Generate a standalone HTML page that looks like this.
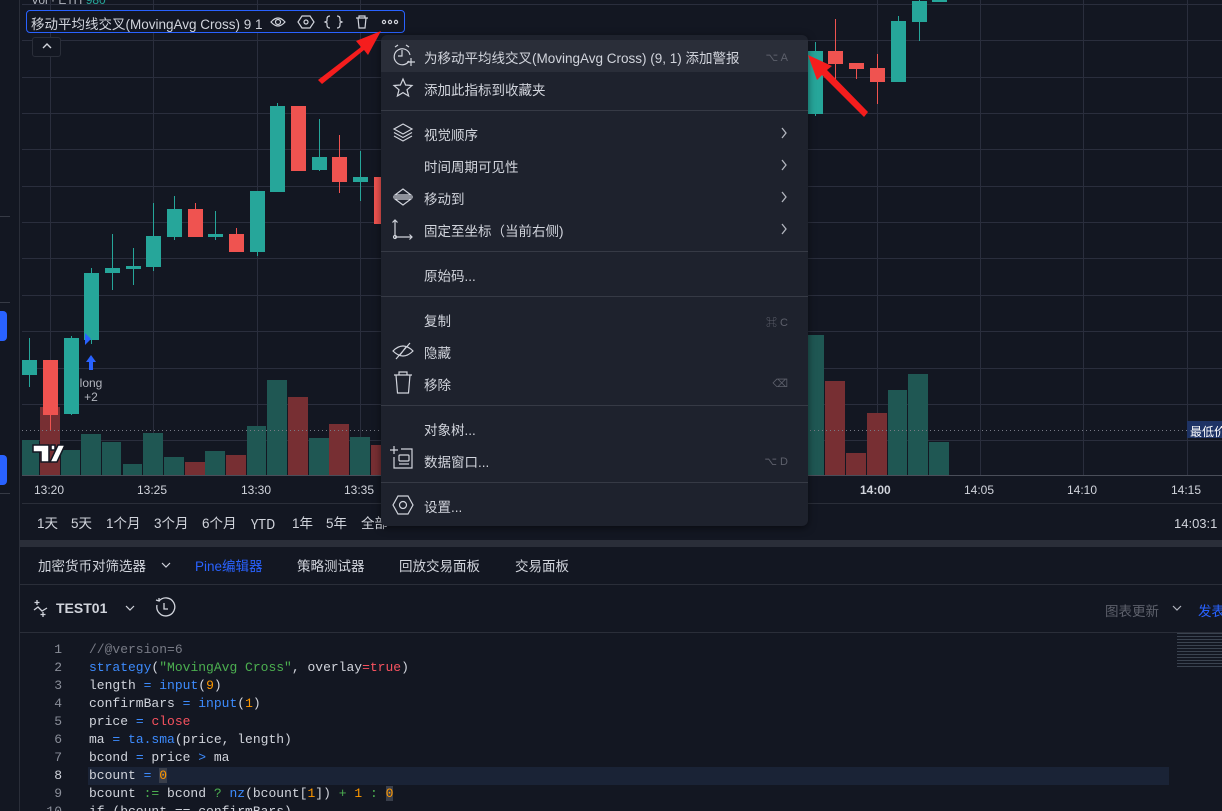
<!DOCTYPE html>
<html><head><meta charset="utf-8">
<style>
*{margin:0;padding:0;box-sizing:border-box}
html,body{width:1222px;height:811px;overflow:hidden}
body{background:#131722;font-family:"Liberation Sans","Noto Sans CJK SC",sans-serif;color:#d1d4dc;position:relative}
.a{position:absolute}
.t{position:absolute;white-space:nowrap}
.mi{position:absolute;left:43px;font-size:13.5px;color:#d1d4dc;white-space:nowrap}
.sc{position:absolute;right:20px;font-size:11px;color:#5d606b}
.sep{position:absolute;left:0;right:0;height:1px;background:#363a45}
.chev{position:absolute;right:20px}
.code{position:absolute;left:89px;font-family:"Liberation Mono",monospace;font-size:13px;color:#d1d4dc;white-space:pre}
.ln{position:absolute;left:40px;width:22px;text-align:right;font-family:"Liberation Mono",monospace;font-size:13px;color:#8a8e99}
.f{color:#3d8bfd}.s{color:#4caf50}.o{color:#ff9800}.r{color:#f7525f}.c{color:#787b86}
.rg{position:absolute;top:514px;height:20px;line-height:20px;font-size:13.5px;color:#d1d4dc;white-space:nowrap}
</style></head><body>
<div class="a" style="left:0;top:0;width:20px;height:811px;background:#131722;border-right:1px solid #2a2e39"></div>
<div class="a" style="left:0;top:311px;width:7px;height:30px;background:#2962ff;border-radius:0 4px 4px 0"></div>
<div class="a" style="left:0;top:455px;width:7px;height:30px;background:#2962ff;border-radius:0 4px 4px 0"></div>
<div class="a" style="left:0;top:216px;width:10px;height:1px;background:#363a45"></div>
<div class="a" style="left:0;top:302px;width:10px;height:1px;background:#363a45"></div>
<div class="a" style="left:0;top:493px;width:10px;height:1px;background:#363a45"></div>
<svg class="a" style="left:22px;top:0" width="1200" height="476" viewBox="22 0 1200 476">
<g stroke="#2a2e3d" stroke-width="1">
<line x1="22" x2="1222" y1="4.5" y2="4.5"/><line x1="22" x2="1222" y1="40.5" y2="40.5"/><line x1="22" x2="1222" y1="77.5" y2="77.5"/><line x1="22" x2="1222" y1="113.5" y2="113.5"/><line x1="22" x2="1222" y1="149.5" y2="149.5"/><line x1="22" x2="1222" y1="186.5" y2="186.5"/><line x1="22" x2="1222" y1="222.5" y2="222.5"/><line x1="22" x2="1222" y1="258.5" y2="258.5"/><line x1="22" x2="1222" y1="295.5" y2="295.5"/><line x1="22" x2="1222" y1="331.5" y2="331.5"/><line x1="22" x2="1222" y1="368.5" y2="368.5"/><line x1="22" x2="1222" y1="404.5" y2="404.5"/><line x1="22" x2="1222" y1="440.5" y2="440.5"/>
<line y1="0" y2="476" x1="50.5" x2="50.5"/><line y1="0" y2="476" x1="153.5" x2="153.5"/><line y1="0" y2="476" x1="257.5" x2="257.5"/><line y1="0" y2="476" x1="360.5" x2="360.5"/><line y1="0" y2="476" x1="877.5" x2="877.5"/><line y1="0" y2="476" x1="980.5" x2="980.5"/><line y1="0" y2="476" x1="1083.5" x2="1083.5"/><line y1="0" y2="476" x1="1187.5" x2="1187.5"/>
</g>
<g fill="#1f5753">
<rect x="22" y="440" width="17" height="36"/><rect x="61" y="450" width="19" height="26"/><rect x="81" y="434" width="20" height="42"/><rect x="102" y="442" width="19" height="34"/><rect x="123" y="464" width="19" height="12"/><rect x="143" y="433" width="20" height="43"/><rect x="164" y="457" width="20" height="19"/><rect x="205" y="451" width="20" height="25"/><rect x="247" y="426" width="19" height="50"/><rect x="267" y="380" width="20" height="96"/><rect x="309" y="438" width="20" height="38"/><rect x="350" y="437" width="20" height="39"/>
<rect x="804" y="335" width="20" height="141"/><rect x="888" y="390" width="19" height="86"/><rect x="908" y="374" width="20" height="102"/><rect x="929" y="442" width="20" height="34"/>
</g>
<g fill="#772f33">
<rect x="40" y="407" width="20" height="69"/><rect x="185" y="462" width="20" height="14"/><rect x="226" y="455" width="20" height="21"/><rect x="288" y="397" width="20" height="79"/><rect x="329" y="424" width="20" height="52"/><rect x="371" y="445" width="10" height="31"/>
<rect x="825" y="381" width="20" height="95"/><rect x="846" y="453" width="20" height="23"/><rect x="867" y="413" width="20" height="63"/>
</g>
<line x1="22" x2="1222" y1="430.5" y2="430.5" stroke="#787b86" stroke-dasharray="1 3"/>
<g stroke="#26a69a" fill="#26a69a">
<line x1="29.5" x2="29.5" y1="338" y2="387"/><rect x="22" y="360" width="15" height="15" stroke="none"/>
<line x1="71.5" x2="71.5" y1="336" y2="415"/><rect x="64" y="338" width="15" height="76" stroke="none"/>
<line x1="91.5" x2="91.5" y1="268" y2="344"/><rect x="84" y="273" width="15" height="67" stroke="none"/>
<line x1="112.5" x2="112.5" y1="234" y2="290"/><rect x="105" y="268" width="15" height="5" stroke="none"/>
<line x1="133.5" x2="133.5" y1="248" y2="285"/><rect x="126" y="266" width="15" height="3" stroke="none"/>
<line x1="153.5" x2="153.5" y1="203" y2="271"/><rect x="146" y="236" width="15" height="31" stroke="none"/>
<line x1="174.5" x2="174.5" y1="196" y2="240"/><rect x="167" y="209" width="15" height="28" stroke="none"/>
<line x1="215.5" x2="215.5" y1="211" y2="240"/><rect x="208" y="234" width="15" height="3" stroke="none"/>
<line x1="257.5" x2="257.5" y1="191" y2="256"/><rect x="250" y="191" width="15" height="61" stroke="none"/>
<line x1="277.5" x2="277.5" y1="103" y2="192"/><rect x="270" y="106" width="15" height="86" stroke="none"/>
<line x1="319.5" x2="319.5" y1="119" y2="171"/><rect x="312" y="157" width="15" height="13" stroke="none"/>
<line x1="360.5" x2="360.5" y1="151" y2="201"/><rect x="353" y="177" width="15" height="5" stroke="none"/>
<line x1="815.5" x2="815.5" y1="42" y2="116"/><rect x="808" y="51" width="15" height="63" stroke="none"/>
<line x1="898.5" x2="898.5" y1="16" y2="82"/><rect x="891" y="21" width="15" height="61" stroke="none"/>
<line x1="919.5" x2="919.5" y1="0" y2="41"/><rect x="912" y="1" width="15" height="21" stroke="none"/>
<rect x="932" y="0" width="15" height="2" stroke="none"/>
</g>
<g stroke="#ef5350" fill="#ef5350">
<line x1="50.5" x2="50.5" y1="360" y2="430"/><rect x="43" y="360" width="15" height="55" stroke="none"/>
<line x1="195.5" x2="195.5" y1="203" y2="237"/><rect x="188" y="209" width="15" height="28" stroke="none"/>
<line x1="236.5" x2="236.5" y1="228" y2="252"/><rect x="229" y="234" width="15" height="18" stroke="none"/>
<rect x="291" y="106" width="15" height="65" stroke="none"/>
<line x1="339.5" x2="339.5" y1="135" y2="193"/><rect x="332" y="157" width="15" height="25" stroke="none"/>
<rect x="374" y="177" width="7" height="47" stroke="none"/>
<line x1="835.5" x2="835.5" y1="19" y2="83"/><rect x="828" y="51" width="15" height="13" stroke="none"/>
<line x1="856.5" x2="856.5" y1="63" y2="79"/><rect x="849" y="63" width="15" height="6" stroke="none"/>
<line x1="877.5" x2="877.5" y1="54" y2="104"/><rect x="870" y="68" width="15" height="14" stroke="none"/>
</g>
<path d="M85 333 L91 339 L85 345Z" fill="#2962ff"/>
<path d="M91 355 L96 362 H93 V370 H89 V362 H86Z" fill="#2962ff"/>
<text x="91" y="387" font-size="12" fill="#b2b5be" text-anchor="middle" font-family="Liberation Sans">long</text>
<text x="91" y="401" font-size="12" fill="#b2b5be" text-anchor="middle" font-family="Liberation Sans">+2</text>
<path d="M33 445 H49 V462 H41 V452 H33Z M51 445 h4 v5 h-4z M58 445 H65 L57 462 H50Z" fill="#fff" stroke="#131722" stroke-width="1.5"/>
<line x1="22" x2="1222" y1="475.5" y2="475.5" stroke="#4a4e59"/>
</svg>
<div class="a" style="left:1187px;top:421px;width:35px;height:17px;background:#1e3365;font-size:12px;color:#fff;padding:2px 0 0 3px;white-space:nowrap;overflow:hidden">最低价</div>
<div class="t" style="left:31px;top:-7px;font-size:12px;color:#b2b5be">Vol · ETH <span style="color:#26a69a">980</span></div>
<div class="a" style="left:26px;top:10px;width:379px;height:23px;border:1px solid #2962ff;border-radius:4px;background:#131722"></div>
<div class="t" style="left:31px;top:13px;font-size:13.5px;color:#d1d4dc">移动平均线交叉(MovingAvg Cross) 9 1</div>
<svg class="a" style="left:268px;top:12px" width="135" height="20" fill="none" stroke="#d1d4dc" stroke-width="1.2">
<path d="M3 10 Q10 2 17 10 Q10 18 3 10Z"/><circle cx="10" cy="10" r="2.5"/>
<path d="M34 4 H42 L46 10 L42 16 H34 L30 10Z"/><circle cx="38" cy="10" r="2"/>
<path d="M62 4 Q59 4 59 7 V9 L57 10 L59 11 V13 Q59 16 62 16 M69 4 Q72 4 72 7 V9 L74 10 L72 11 V13 Q72 16 69 16"/>
<path d="M88 6 H100 M91 6 V4 H97 V6 M90 6 L91 16 H97 L98 6"/>
<circle cx="116" cy="10" r="1.6"/><circle cx="122" cy="10" r="1.6"/><circle cx="128" cy="10" r="1.6"/>
</svg>
<div class="a" style="left:32px;top:37px;width:29px;height:20px;border:1px solid #2a2e39;border-radius:3px;background:#131722"></div>
<svg class="a" style="left:40px;top:41px" width="14" height="10"><path d="M3 7 L7 3 L11 7" stroke="#d1d4dc" fill="none" stroke-width="1.4"/></svg>
<div class="t" style="left:34px;top:483px;font-size:12px;color:#d1d4dc">13:20</div>
<div class="t" style="left:137px;top:483px;font-size:12px;color:#d1d4dc">13:25</div>
<div class="t" style="left:241px;top:483px;font-size:12px;color:#d1d4dc">13:30</div>
<div class="t" style="left:344px;top:483px;font-size:12px;color:#d1d4dc">13:35</div>
<div class="t" style="left:860px;top:483px;font-size:12px;color:#d1d4dc;font-weight:bold">14:00</div>
<div class="t" style="left:964px;top:483px;font-size:12px;color:#d1d4dc">14:05</div>
<div class="t" style="left:1067px;top:483px;font-size:12px;color:#d1d4dc">14:10</div>
<div class="t" style="left:1171px;top:483px;font-size:12px;color:#d1d4dc">14:15</div>
<div class="a" style="left:22px;top:503px;width:1200px;height:1px;background:#2a2e39"></div>
<div class="rg" style="left:37px">1天</div><div class="rg" style="left:71px">5天</div><div class="rg" style="left:106px">1个月</div><div class="rg" style="left:154px">3个月</div><div class="rg" style="left:202px">6个月</div><div class="rg" style="left:251px;font-family:'Noto Sans CJK SC',sans-serif;top:513px">YTD</div><div class="rg" style="left:292px">1年</div><div class="rg" style="left:326px">5年</div><div class="rg" style="left:361px">全部</div>
<div class="t" style="left:1174px;top:516px;font-size:13px;color:#d1d4dc">14:03:1</div>
<div class="a" style="left:20px;top:540px;width:1202px;height:7px;background:#2a2e39"></div>
<div class="t" style="left:38px;top:555px;font-size:13.5px;color:#d1d4dc">加密货币对筛选器</div>
<svg class="a" style="left:160px;top:561px" width="12" height="8"><path d="M2 2 L6 6 L10 2" stroke="#d1d4dc" fill="none" stroke-width="1.2"/></svg>
<div class="t" style="left:195px;top:555px;font-size:13.5px;color:#2962ff">Pine编辑器</div>
<div class="t" style="left:297px;top:555px;font-size:13.5px;color:#d1d4dc">策略测试器</div>
<div class="t" style="left:399px;top:555px;font-size:13.5px;color:#d1d4dc">回放交易面板</div>
<div class="t" style="left:515px;top:555px;font-size:13.5px;color:#d1d4dc">交易面板</div>
<div class="a" style="left:20px;top:584px;width:1202px;height:1px;background:#2a2e39"></div>
<svg class="a" style="left:33px;top:599px" width="16" height="20" fill="none" stroke="#d1d4dc" stroke-width="1.3"><path d="M4 1 V6 M1.5 3.5 H6.5 M1 11 L5 8 L9 12 L14 9 M10 13 V18 M7.5 15.5 H12.5"/></svg>
<div class="t" style="left:56px;top:600px;font-size:14px;font-weight:bold;color:#d1d4dc">TEST01</div>
<svg class="a" style="left:124px;top:604px" width="12" height="8"><path d="M2 2 L6 6 L10 2" stroke="#d1d4dc" fill="none" stroke-width="1.2"/></svg>
<svg class="a" style="left:154px;top:597px" width="22" height="22" fill="none" stroke="#d1d4dc" stroke-width="1.3"><path d="M5 4 A9 9 0 1 1 3 8"/><path d="M2 3 L5 4 L5 1"/><path d="M10 6 V12 H14"/></svg>
<div class="t" style="left:1105px;top:600px;font-size:13.5px;color:#5d606b">图表更新</div>
<svg class="a" style="left:1171px;top:604px" width="12" height="8"><path d="M2 2 L6 6 L10 2" stroke="#b2b5be" fill="none" stroke-width="1.2"/></svg>
<div class="t" style="left:1198px;top:600px;font-size:13.5px;color:#2962ff">发表</div>
<div class="a" style="left:20px;top:632px;width:1202px;height:1px;background:#2a2e39"></div>
<div class="a" style="left:1177px;top:633px;width:45px;height:34px;background:repeating-linear-gradient(#55606e 0 1px,transparent 1px 3px);opacity:.6"></div>
<div class="a" style="left:88px;top:767px;width:1081px;height:18px;background:#1a2336"></div>
<div class="ln" style="top:642px">1</div><div class="code c" style="top:642px">//@version=6</div>
<div class="ln" style="top:660px">2</div><div class="code" style="top:660px"><span class="f">strategy</span>(<span class="s">"MovingAvg Cross"</span>, overlay<span class="r">=true</span>)</div>
<div class="ln" style="top:678px">3</div><div class="code" style="top:678px">length <span class="f">=</span> <span class="f">input</span>(<span class="o">9</span>)</div>
<div class="ln" style="top:696px">4</div><div class="code" style="top:696px">confirmBars <span class="f">=</span> <span class="f">input</span>(<span class="o">1</span>)</div>
<div class="ln" style="top:714px">5</div><div class="code" style="top:714px">price <span class="f">=</span> <span class="r">close</span></div>
<div class="ln" style="top:732px">6</div><div class="code" style="top:732px">ma <span class="f">=</span> <span class="f">ta.sma</span>(price, length)</div>
<div class="ln" style="top:750px">7</div><div class="code" style="top:750px">bcond <span class="f">=</span> price <span class="f">&gt;</span> ma</div>
<div class="ln" style="top:768px;color:#d1d4dc">8</div><div class="code" style="top:768px">bcount <span class="f">=</span> <span class="o" style="background:#3a3f4b">0</span></div>
<div class="ln" style="top:786px">9</div><div class="code" style="top:786px">bcount <span class="s">:=</span> bcond <span class="s">?</span> <span class="f">nz</span>(bcount[<span class="o">1</span>]) <span class="s">+</span> <span class="o">1</span> <span class="s">:</span> <span class="o" style="background:#3a3f4b">0</span></div>
<div class="ln" style="top:804px">10</div><div class="code" style="top:804px">if (bcount == confirmBars)</div>
<div class="a" style="left:381px;top:35px;width:427px;height:491px;background:#1e222d;border-radius:6px;box-shadow:0 2px 8px rgba(0,0,0,.5)">
<div class="a" style="left:0;top:5px;width:427px;height:32px;background:#2a2e39"></div>
<svg class="a" style="left:10px;top:8px" width="26" height="26" fill="none" stroke="#d1d4dc" stroke-width="1.2"><path d="M18 18 A8 8 0 1 1 19 12"/><path d="M11 7 V13 H7"/><path d="M4 4 L7 2 M18 4 L15 2"/><path d="M20 15 V23 M16 19 H24"/></svg>
<div class="mi" style="top:12px">为移动平均线交叉(MovingAvg Cross) (9, 1) 添加警报</div><div class="sc" style="top:16px">⌥ A</div>
<svg class="a" style="left:11px;top:42px" width="22" height="22" fill="none" stroke="#d1d4dc" stroke-width="1.2"><path d="M11 2 L13.6 8 L20 8.5 L15 12.8 L16.6 19 L11 15.6 L5.4 19 L7 12.8 L2 8.5 L8.4 8Z"/></svg>
<div class="mi" style="top:44px">添加此指标到收藏夹</div>
<div class="sep" style="top:75px"></div>
<svg class="a" style="left:11px;top:87px" width="22" height="22" fill="none" stroke="#d1d4dc" stroke-width="1.2"><path d="M11 2 L20 7 L11 12 L2 7Z M2 10.5 L11 15.5 L20 10.5 M2 14 L11 19 L20 14"/></svg>
<div class="mi" style="top:89px">视觉顺序</div><svg class="chev" style="top:92px" width="8" height="12"><path d="M2 1 L6 6 L2 11" stroke="#b2b5be" fill="none" stroke-width="1.3"/></svg>
<div class="mi" style="top:121px">时间周期可见性</div><svg class="chev" style="top:124px" width="8" height="12"><path d="M2 1 L6 6 L2 11" stroke="#b2b5be" fill="none" stroke-width="1.3"/></svg>
<svg class="a" style="left:11px;top:151px" width="22" height="22" fill="none" stroke="#d1d4dc" stroke-width="1.2"><path d="M3 9 L11 3 L19 9Z M3 13 L11 19 L19 13Z M1 11 H21"/></svg>
<div class="mi" style="top:153px">移动到</div><svg class="chev" style="top:156px" width="8" height="12"><path d="M2 1 L6 6 L2 11" stroke="#b2b5be" fill="none" stroke-width="1.3"/></svg>
<svg class="a" style="left:10px;top:182px" width="24" height="24" fill="none" stroke="#d1d4dc" stroke-width="1.2"><path d="M4 3 V19 M1.5 5.5 L4 3 L6.5 5.5 M4 20 H21 M18.5 17.5 L21 20 L18.5 22.5"/><circle cx="4" cy="20" r="1.5"/></svg>
<div class="mi" style="top:185px">固定至坐标（当前右侧)</div><svg class="chev" style="top:188px" width="8" height="12"><path d="M2 1 L6 6 L2 11" stroke="#b2b5be" fill="none" stroke-width="1.3"/></svg>
<div class="sep" style="top:216px"></div>
<div class="mi" style="top:230px">原始码...</div>
<div class="sep" style="top:261px"></div>
<div class="mi" style="top:275px">复制</div><div class="sc" style="top:279px">⌘ C</div>
<svg class="a" style="left:10px;top:305px" width="24" height="22" fill="none" stroke="#d1d4dc" stroke-width="1.2"><path d="M2 11 Q12 1 22 11 Q12 21 2 11Z"/><path d="M5 19 L19 3 M9 15 L15 7"/></svg>
<div class="mi" style="top:307px">隐藏</div>
<svg class="a" style="left:12px;top:336px" width="20" height="24" fill="none" stroke="#d1d4dc" stroke-width="1.2"><path d="M1 4 H19 M6 4 V1 H14 V4 M3 4 L4.5 22 H15.5 L17 4"/></svg>
<div class="mi" style="top:339px">移除</div><div class="sc" style="top:342px">⌫</div>
<div class="sep" style="top:370px"></div>
<div class="mi" style="top:384px">对象树...</div>
<svg class="a" style="left:9px;top:410px" width="26" height="26" fill="none" stroke="#d1d4dc" stroke-width="1.2"><path d="M4 1 V9 M0 5 H8"/><path d="M11 4 H22 V23 H4 V12"/><rect x="9" y="10" width="10" height="6" rx="1"/><path d="M9 19 H19"/></svg>
<div class="mi" style="top:416px">数据窗口...</div><div class="sc" style="top:420px">⌥ D</div>
<div class="sep" style="top:447px"></div>
<svg class="a" style="left:10px;top:459px" width="24" height="22" fill="none" stroke="#d1d4dc" stroke-width="1.2"><path d="M7 2 H17 L22 11 L17 20 H7 L2 11Z"/><circle cx="12" cy="11" r="3.5"/></svg>
<div class="mi" style="top:461px">设置...</div>
</div>
<svg class="a" style="left:0;top:0" width="1222" height="200">
<path d="M318 80 L361 47 L356 41 L381 31 L368 55 L364 50 L322 84Z" fill="#f51d1d"/>
<path d="M864 117 L822 75 L817 80 L808 55 L832 66 L827 70 L868 112Z" fill="#f51d1d"/>
</svg>
</body></html>
